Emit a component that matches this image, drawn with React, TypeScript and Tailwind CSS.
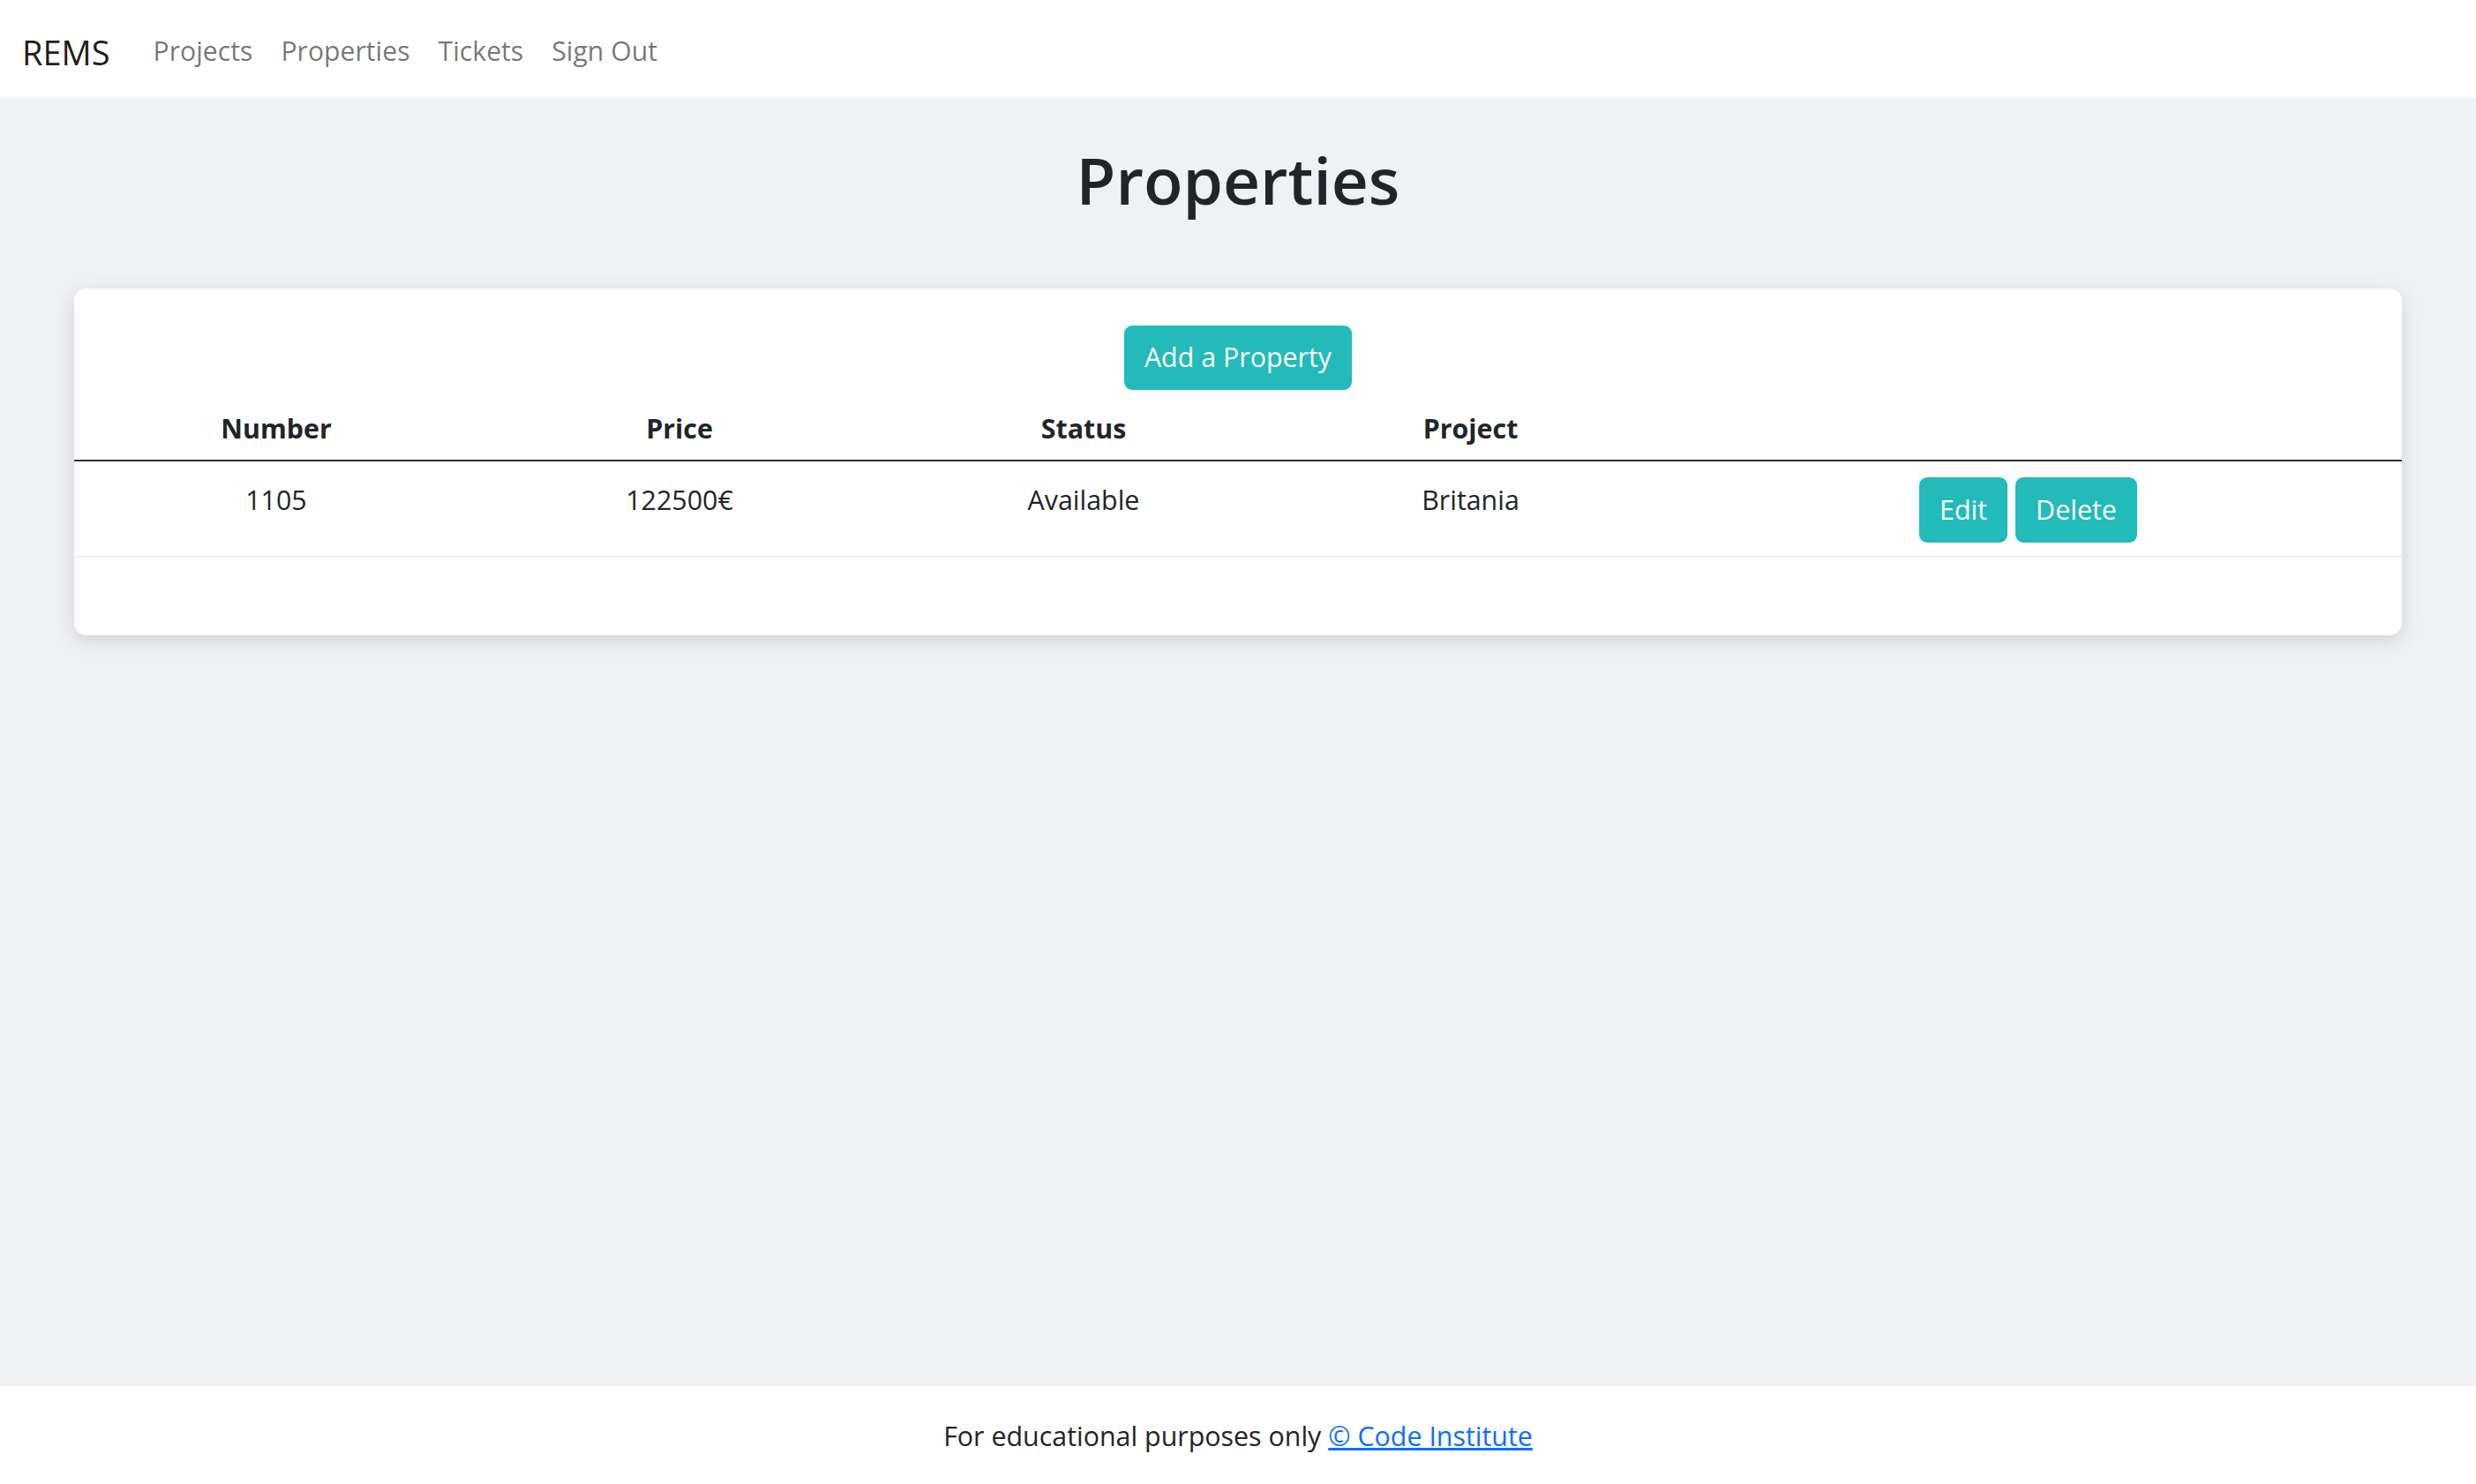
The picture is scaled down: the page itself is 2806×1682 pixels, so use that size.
const navLinks = ['Projects', 'Properties', 'Tickets', 'Sign Out'];

const rows = [
  { number: '1105', price: '122500€', status: 'Available', project: 'Britania' },
];

export default function App() {
  return (
    <div className="min-h-screen flex flex-col bg-[#f0f1f5] font-['Open_Sans',sans-serif] text-[#212529]">
      {/* Navbar */}
      <nav className="h-[111px] shrink-0 bg-white flex items-center pl-[25px] pt-[6px]">
        <a href="#" className="text-[38px] leading-none text-black/90 mr-[33px]">
          REMS
        </a>
        <ul className="flex">
          {navLinks.map((link) => (
            <li key={link}>
              <a href="#" className="block px-[16px] text-[30.2px] leading-none text-black/55">
                {link}
              </a>
            </li>
          ))}
        </ul>
      </nav>

      {/* Content */}
      <main className="flex-1 px-[84px]">
        <h1 className="mt-[50px] text-center text-[73px] leading-[86px] font-semibold">Properties</h1>

        <div className="mt-[80px] bg-white rounded-[14px] shadow-[0_6px_22px_rgba(0,0,0,0.13)] pt-[42px] pb-[89px]">
          <div className="flex justify-center">
            <button className="h-[73px] px-[23px] rounded-[9px] bg-[#23baba] text-white text-[30.4px] leading-none">
              Add a Property
            </button>
          </div>

          <table className="w-full mt-[10px] table-fixed border-collapse text-[30.4px]">
            <colgroup>
              <col className="w-[458px]" />
              <col className="w-[456px]" />
              <col className="w-[460px]" />
              <col className="w-[417px]" />
              <col />
            </colgroup>
            <thead>
              <tr className="border-b-2 border-[#2b2f33]">
                <th className="pt-[12px] pb-[14px] leading-[43px] font-bold text-center">Number</th>
                <th className="pt-[12px] pb-[14px] leading-[43px] font-bold text-center">Price</th>
                <th className="pt-[12px] pb-[14px] leading-[43px] font-bold text-center">Status</th>
                <th className="pt-[12px] pb-[14px] leading-[43px] font-bold text-center">Project</th>
                <th></th>
              </tr>
            </thead>
            <tbody>
              {rows.map((row) => (
                <tr key={row.number} className="border-b border-[#dee2e6]">
                  <td className="align-top pt-[22px] leading-[43px] text-center">{row.number}</td>
                  <td className="align-top pt-[22px] leading-[43px] text-center">{row.price}</td>
                  <td className="align-top pt-[22px] leading-[43px] text-center">{row.status}</td>
                  <td className="align-top pt-[22px] leading-[43px] text-center">{row.project}</td>
                  <td className="align-top pt-[18px] pb-[15px] text-center">
                    <div className="flex justify-center gap-[9px]">
                      <button className="h-[74px] px-[23px] rounded-[9px] bg-[#23baba] text-white leading-none">
                        Edit
                      </button>
                      <button className="h-[74px] px-[23px] rounded-[9px] bg-[#23baba] text-white leading-none">
                        Delete
                      </button>
                    </div>
                  </td>
                </tr>
              ))}
            </tbody>
          </table>
        </div>
      </main>

      {/* Footer */}
      <footer className="h-[111px] shrink-0 bg-white flex items-center justify-center text-[30.4px] pt-[3px]">
        <p>
          For educational purposes only{' '}
          <a href="#" className="text-[#0d6efd] underline">
            © Code Institute
          </a>
        </p>
      </footer>
    </div>
  );
}
